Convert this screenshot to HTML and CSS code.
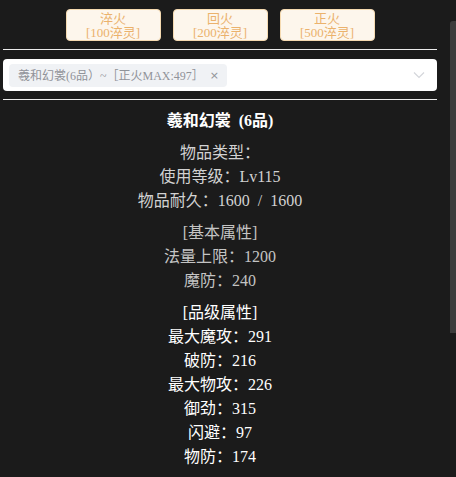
FILE: index.html
```html
<!DOCTYPE html>
<html lang="zh-CN">
<head>
<meta charset="utf-8">
<title>淬火</title>
<link rel="stylesheet" href="styles.css">
</head>
<body>
<div class="panel">
  <div class="btn-row">
    <button class="btn">淬火<br>[100淬灵]</button>
    <button class="btn">回火<br>[200淬灵]</button>
    <button class="btn">正火<br>[500淬灵]</button>
  </div>
  <div class="rule"></div>
  <div class="select">
    <span class="tag">羲和幻裳(6品）~［正火MAX:497］<span class="tag-close">×</span></span>
    <svg class="arrow" width="12" height="8" viewBox="0 0 12 8"><path d="M1 1.5 L6 6.5 L11 1.5" fill="none" stroke="#d4d6db" stroke-width="1.2"/></svg>
  </div>
  <div class="rule rule-b"></div>
  <div class="detail">
    <div class="title">羲和幻裳 (6品)</div>
    <div class="group info">
      <div>物品类型：</div>
      <div>使用等级：Lv115</div>
      <div>物品耐久：1600 / 1600</div>
    </div>
    <div class="group base">
      <div>[基本属性]</div>
      <div>法量上限：1200</div>
      <div>魔防：240</div>
    </div>
    <div class="group grade">
      <div>[品级属性]</div>
      <div>最大魔攻：291</div>
      <div>破防：216</div>
      <div>最大物攻：226</div>
      <div>御劲：315</div>
      <div>闪避：97</div>
      <div>物防：174</div>
    </div>
  </div>
</div>
<div class="scroll-thumb"></div>
</body>
</html>
```

FILE: styles.css
```css
html, body {
  margin: 0;
  padding: 0;
  overflow: hidden;
  background: #1b1b1b;
  height: 100%;
}
body {
  font-family: "Liberation Serif", "Noto Sans CJK SC", serif;
  position: relative;
}
.panel {
  width: 440px;
  padding-top: 9px;
}
.btn-row {
  display: flex;
  justify-content: center;
  gap: 12px;
}
.btn {
  width: 95px;
  height: 32px;
  padding: 1px 0 0;
  margin: 0;
  background: #fdf6ec;
  border: 1px solid #f5dab1;
  border-radius: 4px;
  color: #ebb26c;
  font-family: "Liberation Serif", "Noto Sans CJK SC", serif;
  font-size: 13px;
  line-height: 14px;
  text-align: center;
}
.rule {
  height: 1px;
  margin: 8px 3px 0;
  background: #ececec;
}
.select {
  margin: 9px 3px 0;
  height: 32px;
  background: #fff;
  border-radius: 4px;
  display: flex;
  align-items: center;
  padding-left: 6px;
  box-sizing: border-box;
}
.tag {
  height: 23px;
  display: inline-flex;
  align-items: center;
  padding: 0 8px 0 9px;
  background: #f0f2f5;
  border-radius: 4px;
  color: #909399;
  font-size: 12px;
  white-space: nowrap;
}
.tag-close {
  margin-left: 6px;
  font-family: "DejaVu Sans", sans-serif;
  font-size: 11px;
}
.arrow {
  margin-left: auto;
  margin-right: 12px;
}
.detail {
  padding-top: 9px;
  text-align: center;
  font-size: 16px;
  line-height: 24px;
  word-spacing: 4px;
}
.title {
  color: #fff;
  font-weight: bold;
}
.group {
  margin-top: 8px;
}
.info {
  color: #d2d2d2;
}
.base {
  color: #c4c4c4;
}
.grade {
  color: #fff;
}
.scroll-thumb {
  position: absolute;
  left: 450px;
  top: 21px;
  width: 6px;
  height: 312px;
  background: #3c3c3c;
  border-radius: 3px 0 0 0;
}
```
